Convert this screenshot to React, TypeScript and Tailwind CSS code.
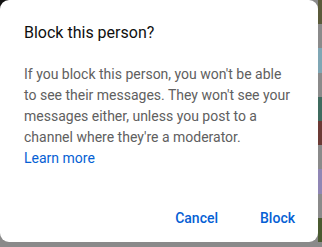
const strip = [
  "bg-[#5a5a3a]",
  "bg-[#8a8a8a]",
  "bg-[#7fa6b4]",
  "bg-[#8a8a8a]",
  "bg-[#3f6a5e]",
  "bg-[#6b3a35]",
  "bg-[#8a8a8a]",
  "bg-[#8f86b4]",
  "bg-[#8a8a8a]",
  "bg-[#4a5a30]",
];

export default function App() {
  return (
    <div
      className="w-[322px] h-[247px] overflow-hidden bg-[#8a8a8a] bg-[radial-gradient(circle_at_top_left,#111_9px,#8a8a8a_10px)]"
      style={{ fontFamily: "Roboto, 'Liberation Sans', sans-serif" }}
    >
      <div className="flex h-[242px]">
        <div className="w-[318px] h-[242px] bg-white rounded-[9px] flex flex-col">
          <h2 className="pl-6 pt-[21px] text-[16px] leading-6 text-[#0f0f0f] font-normal">
            Block this person?
          </h2>
          <div className="px-6 mt-[19px] text-[14px] leading-[21px] text-[#606060]">
            <p>
              If you block this person, you won't be able to see their messages.
              They won't see your messages either, unless you post to a channel
              where they're a moderator.
            </p>
            <a className="text-[#065fd4]">Learn more</a>
          </div>
          <div className="mt-auto mb-[6px] pr-[7px] flex justify-end gap-[10px]">
            <button className="h-9 px-4 text-[14px] font-medium text-[#065fd4]">
              Cancel
            </button>
            <button className="h-9 px-4 text-[14px] font-medium text-[#065fd4]">
              Block
            </button>
          </div>
        </div>
        <div className="flex-1 flex flex-col">
          {strip.map((c, i) => (
            <div key={i} className={`flex-1 ${c}`} />
          ))}
        </div>
      </div>
    </div>
  );
}
